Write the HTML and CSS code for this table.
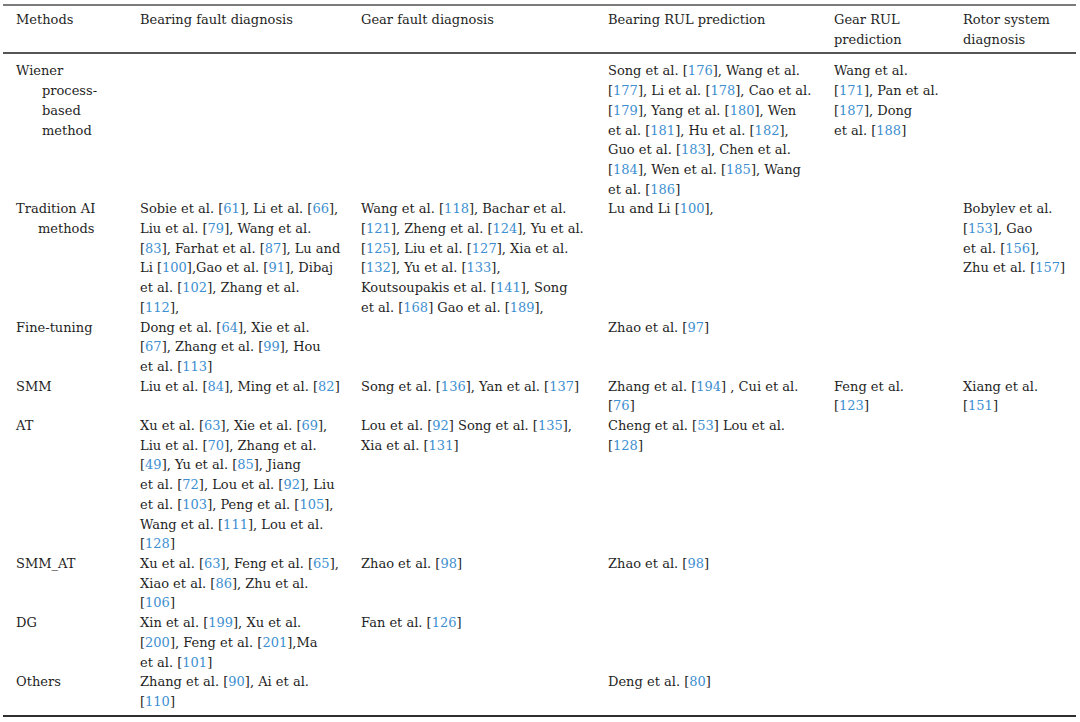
FILE: index.html
```html
<!DOCTYPE html>
<html lang="en">
<head>
<meta charset="utf-8">
<title>Methods table</title>
<link rel="stylesheet" href="styles.css">
</head>
<body>
<table class="tbl">
  <colgroup>
    <col class="c1"><col class="c2"><col class="c3"><col class="c4"><col class="c5"><col class="c6">
  </colgroup>
  <thead>
    <tr>
      <th>Methods</th>
      <th>Bearing fault diagnosis</th>
      <th>Gear fault diagnosis</th>
      <th>Bearing RUL prediction</th>
      <th>Gear RUL<br>prediction</th>
      <th>Rotor system<br>diagnosis</th>
    </tr>
  </thead>
  <tbody>
    <tr class="first">
      <td><span class="ln">Wiener</span><span class="ln h1">process-</span><span class="ln h1">based</span><span class="ln h1">method</span></td>
      <td></td>
      <td></td>
      <td>Song et al. [<a class="r">176</a>], Wang et al.<br>[<a class="r">177</a>], Li et al. [<a class="r">178</a>], Cao et al.<br>[<a class="r">179</a>], Yang et al. [<a class="r">180</a>], Wen<br>et al. [<a class="r">181</a>], Hu et al. [<a class="r">182</a>],<br>Guo et al. [<a class="r">183</a>], Chen et al.<br>[<a class="r">184</a>], Wen et al. [<a class="r">185</a>], Wang<br>et al. [<a class="r">186</a>]</td>
      <td>Wang et al.<br>[<a class="r">171</a>], Pan et al.<br>[<a class="r">187</a>], Dong<br>et al. [<a class="r">188</a>]</td>
      <td></td>
    </tr>
    <tr>
      <td><span class="ln">Tradition AI</span><span class="ln h2">methods</span></td>
      <td>Sobie et al. [<a class="r">61</a>], Li et al. [<a class="r">66</a>],<br>Liu et al. [<a class="r">79</a>], Wang et al.<br>[<a class="r">83</a>], Farhat et al. [<a class="r">87</a>], Lu and<br>Li [<a class="r">100</a>],Gao et al. [<a class="r">91</a>], Dibaj<br>et al. [<a class="r">102</a>], Zhang et al.<br>[<a class="r">112</a>],</td>
      <td>Wang et al. [<a class="r">118</a>], Bachar et al.<br>[<a class="r">121</a>], Zheng et al. [<a class="r">124</a>], Yu et al.<br>[<a class="r">125</a>], Liu et al. [<a class="r">127</a>], Xia et al.<br>[<a class="r">132</a>], Yu et al. [<a class="r">133</a>],<br>Koutsoupakis et al. [<a class="r">141</a>], Song<br>et al. [<a class="r">168</a>] Gao et al. [<a class="r">189</a>],</td>
      <td>Lu and Li [<a class="r">100</a>],</td>
      <td></td>
      <td>Bobylev et al.<br>[<a class="r">153</a>], Gao<br>et al. [<a class="r">156</a>],<br>Zhu et al. [<a class="r">157</a>]</td>
    </tr>
    <tr>
      <td>Fine-tuning</td>
      <td>Dong et al. [<a class="r">64</a>], Xie et al.<br>[<a class="r">67</a>], Zhang et al. [<a class="r">99</a>], Hou<br>et al. [<a class="r">113</a>]</td>
      <td></td>
      <td>Zhao et al. [<a class="r">97</a>]</td>
      <td></td>
      <td></td>
    </tr>
    <tr>
      <td>SMM</td>
      <td>Liu et al. [<a class="r">84</a>], Ming et al. [<a class="r">82</a>]</td>
      <td>Song et al. [<a class="r">136</a>], Yan et al. [<a class="r">137</a>]</td>
      <td>Zhang et al. [<a class="r">194</a>] , Cui et al.<br>[<a class="r">76</a>]</td>
      <td>Feng et al.<br>[<a class="r">123</a>]</td>
      <td>Xiang et al.<br>[<a class="r">151</a>]</td>
    </tr>
    <tr>
      <td>AT</td>
      <td>Xu et al. [<a class="r">63</a>], Xie et al. [<a class="r">69</a>],<br>Liu et al. [<a class="r">70</a>], Zhang et al.<br>[<a class="r">49</a>], Yu et al. [<a class="r">85</a>], Jiang<br>et al. [<a class="r">72</a>], Lou et al. [<a class="r">92</a>], Liu<br>et al. [<a class="r">103</a>], Peng et al. [<a class="r">105</a>],<br>Wang et al. [<a class="r">111</a>], Lou et al.<br>[<a class="r">128</a>]</td>
      <td>Lou et al. [<a class="r">92</a>] Song et al. [<a class="r">135</a>],<br>Xia et al. [<a class="r">131</a>]</td>
      <td>Cheng et al. [<a class="r">53</a>] Lou et al.<br>[<a class="r">128</a>]</td>
      <td></td>
      <td></td>
    </tr>
    <tr>
      <td>SMM_AT</td>
      <td>Xu et al. [<a class="r">63</a>], Feng et al. [<a class="r">65</a>],<br>Xiao et al. [<a class="r">86</a>], Zhu et al.<br>[<a class="r">106</a>]</td>
      <td>Zhao et al. [<a class="r">98</a>]</td>
      <td>Zhao et al. [<a class="r">98</a>]</td>
      <td></td>
      <td></td>
    </tr>
    <tr>
      <td>DG</td>
      <td>Xin et al. [<a class="r">199</a>], Xu et al.<br>[<a class="r">200</a>], Feng et al. [<a class="r">201</a>],Ma<br>et al. [<a class="r">101</a>]</td>
      <td>Fan et al. [<a class="r">126</a>]</td>
      <td></td>
      <td></td>
      <td></td>
    </tr>
    <tr class="last">
      <td>Others</td>
      <td>Zhang et al. [<a class="r">90</a>], Ai et al.<br>[<a class="r">110</a>]</td>
      <td></td>
      <td>Deng et al. [<a class="r">80</a>]</td>
      <td></td>
      <td></td>
    </tr>
  </tbody>
</table>
</body>
</html>
```
FILE: styles.css
```css
html, body {
  margin: 0;
  padding: 0;
  background: #ffffff;
}

body {
  font-family: "DejaVu Serif", "Liberation Serif", serif;
  font-size: 13px;
  color: #1f1f1f;
}

.tbl {
  margin: 4px 0 0 3px;
  width: 1073px;
  table-layout: fixed;
  border-collapse: collapse;
  border-top: 2px solid #7c7c7c;
  border-bottom: 2px solid #2f2f2f;
}

.c1 { width: 137px; }
.c2 { width: 221px; }
.c3 { width: 247px; }
.c4 { width: 226px; }
.c5 { width: 129px; }
.c6 { width: 113px; }

.tbl th,
.tbl td {
  padding: 0;
  text-align: left;
  vertical-align: top;
  line-height: 19.7px;
  white-space: nowrap;
  font-weight: normal;
}

.tbl th:first-child,
.tbl td:first-child {
  padding-left: 13px;
}

.tbl thead th {
  padding-top: 4px;
  padding-bottom: 3px;
  border-bottom: 2px solid #555555;
}

.tbl tr.first td {
  padding-top: 7px;
}

.tbl tr.last td {
  padding-bottom: 3px;
}

.ln {
  display: block;
}

.h1 { padding-left: 26px; }
.h2 { padding-left: 22px; }

.r {
  color: #3d8fd1;
  text-decoration: none;
}
```
